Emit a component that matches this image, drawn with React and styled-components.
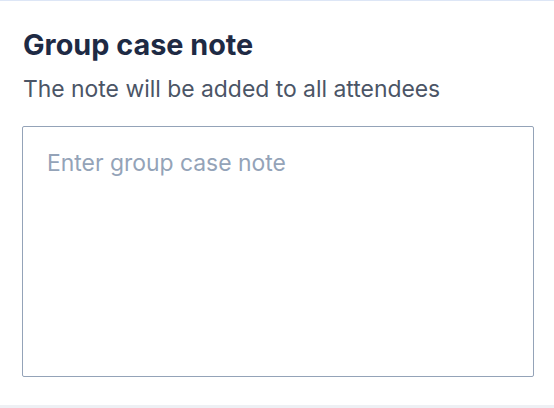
import React from 'react'
import styled, { createGlobalStyle } from 'styled-components';

const GlobalStyle = createGlobalStyle`
  html, body {
    margin: 0;
    padding: 0;
    background: #ffffff;
  }
  body {
    font-family: Inter, "Noto Sans", sans-serif;
  }
`

const Panel = styled.section`
  height: 408px;
  box-sizing: border-box;
  border-top: 1px solid #dde6f6;
  border-bottom: 3px solid #eef0f4;
  padding: 26px 20px 0 22px;
  display: flex;
  flex-direction: column;
`

const Title = styled.h2`
  margin: 0;
  font-size: 28.8px;
  line-height: 36px;
  font-weight: 700;
  color: #1e2a44;
  padding-left: 1px;
`

const Subtitle = styled.p`
  margin: 10px 0 0;
  font-size: 22.9px;
  line-height: 32px;
  color: #4b5566;
  padding-left: 1px;
`

const NoteInput = styled.textarea`
  margin-top: 21px;
  width: 100%;
  height: 251px;
  box-sizing: border-box;
  border: 1px solid #94a3b8;
  border-radius: 2px;
  padding: 20px 24px;
  font-family: inherit;
  font-size: 22.9px;
  line-height: 32px;
  color: #1e293b;
  resize: none;
  outline: none;

  &::placeholder {
    color: #94a3b8;
  }
`

const App = () => {
  return (
    <>
      <GlobalStyle />
      <Panel>
        <Title>Group case note</Title>
        <Subtitle>The note will be added to all attendees</Subtitle>
        <NoteInput placeholder="Enter group case note" />
      </Panel>
    </>
  )
}

export default App
